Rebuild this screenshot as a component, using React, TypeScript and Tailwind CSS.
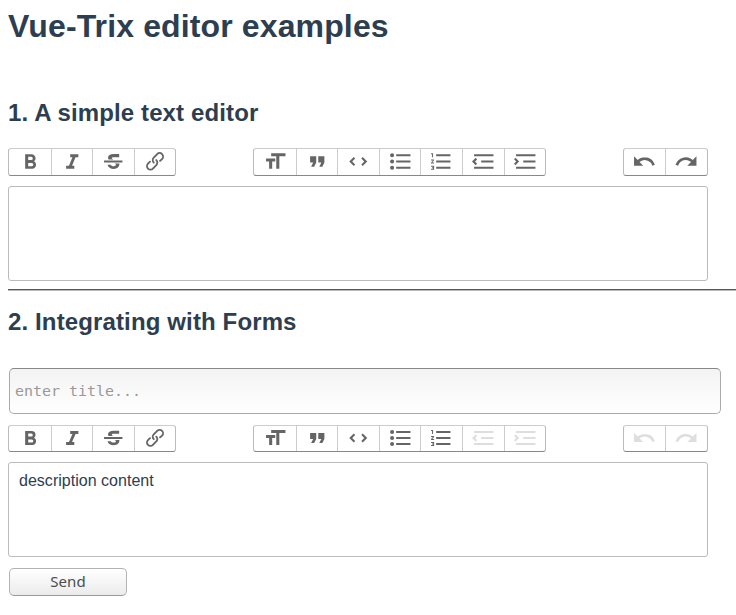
import React from "react";

const paths = {
  bold: "M15.6 11.8c1-.7 1.6-1.8 1.6-2.8a4 4 0 0 0-4-4H7v14h7c2.1 0 3.7-1.7 3.7-3.8 0-1.5-.8-2.8-2.1-3.4zM10 7.5h3a1.5 1.5 0 1 1 0 3h-3v-3zm3.5 9H10v-3h3.5a1.5 1.5 0 1 1 0 3z",
  italic: "M10 5v3h2.2l-3.4 8H6v3h8v-3h-2.2l3.4-8H18V5h-8z",
  strike:
    "M3 13h18v-2H3zM7.400 10A3.600 3.600 0 0 1 6.900 8.300C6.900 6.100 9 4.800 12.400 4.800H17.800V7.800H12.400C11.200 7.800 10.600 8.200 10.600 8.700 10.600 9.300 11.200 9.700 12.200 10zM13.300 14H18C18.200 17.300 16 19.200 12.500 19.200 9.300 19.200 7 17.800 6.400 15.200H9.600C10.100 16.200 11 16.600 12.300 16.600 13.900 16.600 14.600 16 14.600 15.200 14.600 14.600 14.100 14.300 13.300 14z",
  link: "M9.88 13.7a4.3 4.3 0 0 1 0-6.07l3.37-3.37a4.26 4.26 0 0 1 6.07 0 4.3 4.3 0 0 1 0 6.06l-1.96 1.72a.91.91 0 1 1-1.3-1.3l1.97-1.71a2.46 2.46 0 0 0-3.48-3.48l-3.38 3.37a2.46 2.46 0 0 0 0 3.48.91.91 0 1 1-1.3 1.3z M4.25 19.46a4.3 4.3 0 0 1 0-6.07l1.93-1.9a.91.91 0 1 1 1.3 1.3l-1.93 1.9a2.46 2.46 0 0 0 3.48 3.48l3.37-3.38c.96-.96.96-2.52 0-3.48a.91.91 0 1 1 1.3-1.3 4.3 4.3 0 0 1 0 6.07l-3.38 3.38a4.26 4.26 0 0 1-6.07 0z",
  heading: "M12 9v3H9v7H6v-7H3V9h9zM8 4h14v3h-6v12h-3V7H8V4z",
  quote: "M6 17h3l2-4V7H5v6h3zm8 0h3l2-4V7h-6v6h3z",
  code: "M17.9 12L15 15l1.400 1.400 4.400-4.400-4.400-4.400L15 9zM6.100 12L9 9 7.600 7.600 3.200 12l4.400 4.400L9 15z",
  bullets:
    "M2 12a2 2 0 1 0 4 0a2 2 0 1 0-4 0zM2 6a2 2 0 1 0 4 0a2 2 0 1 0-4 0zM2 18a2 2 0 1 0 4 0a2 2 0 1 0-4 0zM8 19h14v-2H8v2zm0-6h14v-2H8v2zm0-8v2h14V5H8z",
  numbers:
    "M2 17h2v.5H3v1h1v.5H2v1h3v-4H2v1zm1-9h1V4H2v1h1v3zm-1 3h1.8L2 13.1v.9h3v-1H3.2L5 10.900V10H2v1zm5-6v2h14V5H7zm0 14h14v-2H7v2zm0-6h14v-2H7v2z",
  outdent:
    "M3 19h19v-2H3v2zm7-6h12v-2H10v2zm-8.3-.3l2.8 2.9L6 14.2 4 12l2-2-1.4-1.5L1 12l.7.7zM3 5v2h19V5H3z",
  indent:
    "M3 19h19v-2H3v2zm7-6h12v-2H10v2zm-6.900-1L1 14.2l1.4 1.4L6 12l-.7-.7-2.8-2.8L1 9.900 3.100 12zM3 5v2h19V5H3z",
  undo: "M12.5 8c-2.6 0-5 1-6.900 2.600L2 7v9h9l-3.600-3.600A8 8 0 0 1 20 16l2.400-.8a10.500 10.500 0 0 0-10-7.200z",
  redo: "M18.4 10.6a10.5 10.5 0 0 0-16.9 4.6L4 16a8 8 0 0 1 12.7-3.6L13 16h9V7l-3.6 3.6z",
};

type IconName = keyof typeof paths;

type Sizing = { buttonHeight: string; iconSize: string };

type GroupProps = Sizing & { icons: IconName[]; disabled: IconName[] };

function Group({ icons, disabled, buttonHeight, iconSize }: GroupProps) {
  return (
    <div className="flex rounded-[3px] border border-[#bbb] border-t-[#ccc] border-b-[#888]">
      {icons.map((name) => (
        <button
          key={name}
          aria-label={name}
          disabled={disabled.includes(name)}
          className={`flex w-[41.6px] items-start justify-center border-l border-[#ccc] first:border-l-0 ${buttonHeight}`}
        >
          <svg
            viewBox="0 0 24 24"
            preserveAspectRatio="none"
            className={`shrink-0 ${iconSize} ${disabled.includes(name) ? "opacity-[.125]" : "opacity-60"}`}
          >
            <path d={paths[name]} />
          </svg>
        </button>
      ))}
    </div>
  );
}

type EditorProps = Sizing & { text?: string; disabled?: IconName[] };

function Editor({ text = "", disabled = [], buttonHeight, iconSize }: EditorProps) {
  const shared = { disabled, buttonHeight, iconSize };
  return (
    <div className="w-[700px]">
      <div className="flex justify-between">
        <Group icons={["bold", "italic", "strike", "link"]} {...shared} />
        <Group
          icons={["heading", "quote", "code", "bullets", "numbers", "outdent", "indent"]}
          {...shared}
        />
        <Group icons={["undo", "redo"]} {...shared} />
      </div>
      <div className="mt-[10px] h-[95px] rounded-[3px] border border-[#bbb] px-[10px] py-[8px] text-base leading-[19px] tracking-[0.02px]">
        {text}
      </div>
    </div>
  );
}

export default function App() {
  return (
    <main className="h-[615px] overflow-hidden bg-white pt-[8px] pl-[8px] font-['Liberation_Sans',Arial,sans-serif] text-[#2c3e50]">
      <h1 className="text-[32px] leading-[37px] font-bold tracking-[0.13px]">Vue-Trix editor examples</h1>
      <h2 className="mt-[54px] text-[24px] leading-[27px] font-bold tracking-[0.12px]">
        1. A simple text editor
      </h2>
      <div className="mt-[22px]">
        <Editor buttonHeight="h-[26px]" iconSize="h-[25px] w-[24.5px]" />
      </div>
      <hr className="mt-[8px] h-[2px] border-t border-b border-t-[#555] border-b-[#bbb]" />
      <h2 className="mt-[17px] text-[24px] leading-[27px] font-bold tracking-[0.13px]">
        2. Integrating with Forms
      </h2>
      <input
        placeholder="enter title..."
        className="mt-[33px] ml-px block h-[46px] w-[712px] rounded-[5px] border border-[#aaa] border-t-[#888] bg-linear-to-b from-[#f3f3f3] to-white px-[5px] font-['DejaVu_Sans_Mono',monospace] text-[14.95px] placeholder:text-[#999]"
      />
      <div className="mt-[11px]">
        <Editor
          text="description content"
          disabled={["outdent", "indent", "undo", "redo"]}
          buttonHeight="h-[25px]"
          iconSize="h-[24px] w-[24.5px]"
        />
      </div>
      <button className="mt-[11px] ml-px flex h-[28px] w-[118px] items-center justify-center rounded-[5px] border border-[#b4b4b4] border-b-[#999] bg-linear-to-b from-white to-[#ebebeb] pb-[2px] font-['Noto_Sans',sans-serif] text-[15px] tracking-[0.1px] text-[#4c4c4c]">
        Send
      </button>
    </main>
  );
}
